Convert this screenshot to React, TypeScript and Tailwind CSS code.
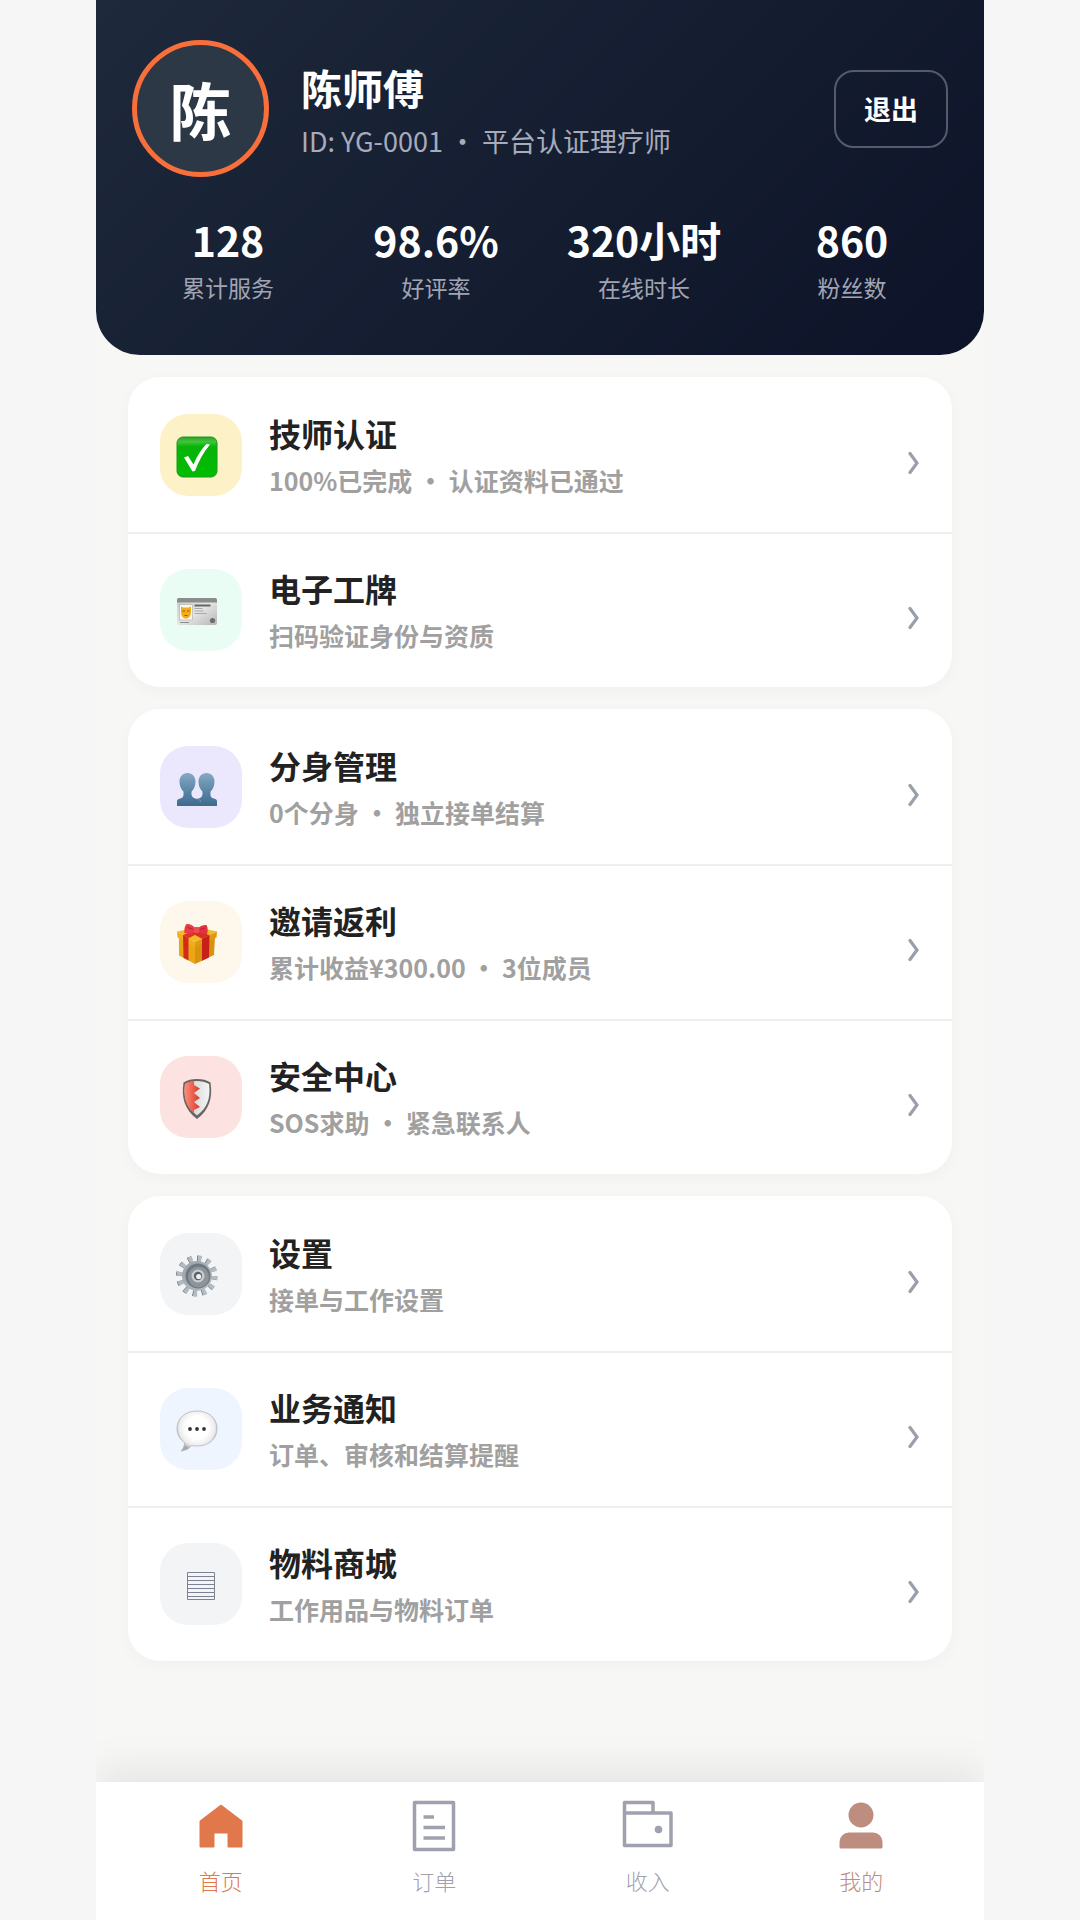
import type { ReactNode } from 'react';

interface MenuItem {
  title: string;
  desc: string;
  tile: string;
  icon: ReactNode;
}

const CheckIcon = () => (
  <svg viewBox="0 0 42 42" className="w-[42px] h-[42px]" aria-hidden="true">
    <defs>
      <linearGradient id="check-fill" x1="0" y1="0" x2="0" y2="1">
        <stop offset="0" stopColor="#2f9f2c" />
        <stop offset="0.12" stopColor="#3fc53a" />
        <stop offset="0.24" stopColor="#08b30a" />
        <stop offset="1" stopColor="#00bd00" />
      </linearGradient>
    </defs>
    <rect x="1" y="1" width="40" height="40" rx="6" fill="url(#check-fill)" stroke="#1b9a1b" />
    <path d="M8 21.500 L12 20 L17.500 28.500 C21 20 25 13.500 30.500 8 L34 8.500 C27.500 16 22.500 25.500 19 35 L16.500 35.500 Z" fill="#fff" />
  </svg>
);

const BadgeIcon = () => (
  <svg viewBox="0 0 42 42" className="w-[42px] h-[42px]" aria-hidden="true">
    <defs>
      <linearGradient id="badge-fill" x1="0" y1="0" x2="1" y2="1">
        <stop offset="0" stopColor="#c9c9c9" />
        <stop offset="0.5" stopColor="#e6e6e6" />
        <stop offset="1" stopColor="#b5b5b5" />
      </linearGradient>
    </defs>
    <rect x="1" y="7" width="40" height="27" rx="2" fill="url(#badge-fill)" />
    <path d="M3 7h36a2 2 0 0 1 2 2v2.500H1V9a2 2 0 0 1 2-2z" fill="#8b8d8c" />
    <rect x="3.500" y="13.500" width="13" height="15.500" fill="#fbf9ee" stroke="#a9a9a9" strokeWidth="0.600" />
    <path d="M5 15.500 L7.500 16.500 H12.500 L15 15.500 V21 C15 25 13 27.500 10 27.500 C7 27.500 5 25 5 21 Z" fill="#f3ad1c" />
    <path d="M6.500 20h2.500M11 20h2.500M8.500 24.500h3" stroke="#8c5a10" strokeWidth="1.100" />
    <path d="M18.500 14.500h16" stroke="#666" strokeWidth="1.800" />
    <path d="M18.500 17.500h8M18.500 20h9M18.500 22.500h12" stroke="#9a9a9a" strokeWidth="0.800" />
    <path d="M4 31.500h9" stroke="#8d8d8d" strokeWidth="1.200" />
    <circle cx="36.500" cy="29.500" r="2.600" fill="#6d6d6d" />
  </svg>
);

const PeopleIcon = () => (
  <svg viewBox="0 0 42 42" className="w-[42px] h-[42px]" aria-hidden="true">
    <defs>
      <linearGradient id="people-fill" x1="0" y1="0" x2="0" y2="1">
        <stop offset="0" stopColor="#84a9c4" />
        <stop offset="0.65" stopColor="#527f9f" />
        <stop offset="1" stopColor="#3f6b8c" />
      </linearGradient>
    </defs>
    <path
      d="M11.500 5c-5 0-8 3.500-8 8.700 0 4.800 1.900 7.600 3.900 9.800.6 3.500 0 6-2.400 6.800-2.400.7-4 1-4 3V38h40v-4.700c0-2-1.600-2.300-4-3-2.400-.8-3-3.300-2.400-6.800 2-2.200 3.900-5 3.900-9.800C38.500 8.500 35.500 5 30.500 5s-8 3.500-8 8.700c0 4.800 1.900 7.600 3.900 9.800.6 4-.4 6.500-5.400 7.500-5-1-6-3.500-5.400-7.500 2-2.200 3.900-5 3.900-9.800C19.500 8.500 16.500 5 11.500 5z"
      fill="url(#people-fill)"
    />
    <path d="M21 30.500c2 .8 3.500 1.500 3.500 3.500" stroke="#7da3bf" strokeWidth="0.800" fill="none" />
  </svg>
);

const GiftIcon = () => (
  <svg viewBox="0 0 42 42" className="w-[42px] h-[42px]" aria-hidden="true">
    <path d="M3 14 L19 23 V41 L3 32.500 Z" fill="#e9a714" />
    <path d="M39 14 L19 23 V41 L38 32 Z" fill="#d8920d" />
    <path d="M1 8.500 L22 4.500 L41 8.500 L19 19 Z" fill="#f5b925" />
    <path d="M1 8.500 L19 19 V24.500 L1.500 14.500 Z" fill="#efae1c" />
    <path d="M41 8.500 L19 19 V24.500 L40.500 14.500 Z" fill="#dd9a12" />
    <path d="M7 12 L12.500 15.200 V37.500 L7.500 34.800 Z" fill="#d42a1c" />
    <path d="M33.500 12 L26 15.700 V37.800 L33 34.500 Z" fill="#c7201a" />
    <path d="M7 12 L25 5 L30 6 L12.500 15.200 Z" fill="#dc3428" />
    <path d="M33.500 12 L14 6 L10 7 L26 15.700 Z" fill="#d62f24" />
    <path d="M19 5 C16.500 2 13.500 .5 10.500 1 C8.500 3.500 8 7 8.500 10 C13 11 17 10.500 19 8.500 Z" fill="#e83c44" />
    <path d="M22 5 C25 2.500 28 1.500 30.500 2 C32 4.500 32 8 31 11 C27 11 24 10.500 22 8.500 Z" fill="#e2323c" />
    <path d="M11.500 4.500 C14 5 16.500 6 18.500 7M29 5C27 5.500 24.500 6.500 22.500 7" stroke="#b01c30" strokeWidth="0.800" fill="none" />
    <rect x="17.500" y="4" width="6" height="6" rx="2" fill="#ee4c52" />
  </svg>
);

const ShieldIcon = () => (
  <svg viewBox="0 0 42 42" className="w-[42px] h-[42px]" aria-hidden="true">
    <defs>
      <linearGradient id="shield-red" x1="0" y1="0" x2="1" y2="0">
        <stop offset="0" stopColor="#ff8d78" />
        <stop offset="1" stopColor="#d9392c" />
      </linearGradient>
      <linearGradient id="shield-silver" x1="0" y1="0" x2="1" y2="0">
        <stop offset="0" stopColor="#c9cccc" />
        <stop offset="1" stopColor="#f4f5f5" />
      </linearGradient>
    </defs>
    <path d="M21 1 C26 1 31 2 34.500 4.500 C37 20 33 32 21 41 C9 32 5 20 7.500 4.500 C11 2 16 1 21 1 Z" fill="#6a6361" />
    <path d="M21 3 C25 3 30 4 33 6 C35 20 31 30 21 37.500 C11 30 7 20 9 6 C12 4 17 3 21 3 Z" fill="url(#shield-silver)" />
    <path d="M18 3 V7 L24 10.500 L18 15 L24 20 L18 24 L24 29 L18 32 V35 C11 29 7 20 9 6 C12 4 15 3.500 18 3 Z" fill="url(#shield-red)" />
  </svg>
);

const GearIcon = () => (
  <svg viewBox="0 0 42 42" className="w-[42px] h-[42px]" aria-hidden="true">
    <defs>
      <linearGradient id="gear-fill" x1="0" y1="0" x2="1" y2="1">
        <stop offset="0" stopColor="#99a1a8" />
        <stop offset="1" stopColor="#b9c0c6" />
      </linearGradient>
    </defs>
    <circle cx="20.500" cy="21" r="17.500" fill="none" stroke="#70777e" strokeWidth="6" strokeDasharray="3.800 5.363" />
    <circle cx="21.300" cy="21" r="17.500" fill="none" stroke="#b4bcc3" strokeWidth="6" strokeDasharray="3.800 5.363" />
    <circle cx="21" cy="21" r="15" fill="url(#gear-fill)" />
    <circle cx="22" cy="21" r="12.500" fill="#70777e" />
    <circle cx="22.500" cy="22" r="10.500" fill="#8d959c" />
    <circle cx="22" cy="21" r="6.500" fill="#c9ced2" />
    <circle cx="22" cy="21" r="4.200" fill="#5b6269" />
    <circle cx="22.700" cy="21.500" r="2.600" fill="#eef0f2" />
  </svg>
);

const SpeechIcon = () => (
  <svg viewBox="0 0 42 42" className="w-[42px] h-[42px]" aria-hidden="true">
    <defs>
      <radialGradient id="speech-fill" cx="0.5" cy="0.42" r="0.56">
        <stop offset="0.5" stopColor="#fff" />
        <stop offset="0.8" stopColor="#ececec" />
        <stop offset="1" stopColor="#a9a8a8" />
      </radialGradient>
    </defs>
    <path
      d="M21 1 C9 1 1 8.500 1 18.500 C1 24.500 4 29.500 8.500 32.500 C8.500 36 7.500 38.500 5 41 C10 40.500 13.500 38.500 15.500 35.500 C29.500 38 41 31 41 18.500 C41 8.500 33 1 21 1 Z"
      fill="url(#speech-fill)"
      stroke="#b5b4b4"
      strokeWidth="0.800"
    />
    <circle cx="14" cy="19" r="1.900" fill="#333" />
    <circle cx="21" cy="19" r="1.900" fill="#333" />
    <circle cx="28" cy="19" r="1.900" fill="#333" />
  </svg>
);

const MaterialIcon = () => (
  <svg viewBox="0 0 30 30" className="w-[30px] h-[30px] ml-2" fill="none" stroke="#7d8290" aria-hidden="true">
    <path d="M1.500 1.500h27v27h-27z M1.500 5.500h27M1.500 9.500h27M1.500 13.500h27M1.500 17.500h27M1.500 21.500h27M1.500 25.500h27" />
  </svg>
);

const ChevronIcon = () => (
  <svg viewBox="0 0 12 24" className="w-3 h-6 mt-4 shrink-0" fill="none" aria-hidden="true">
    <path d="M2 2.500 L9 12 L2 21.500" stroke="#9b9eac" strokeWidth="3.200" strokeLinecap="round" />
  </svg>
);

const stats = [
  { value: '128', label: '累计服务' },
  { value: '98.6%', label: '好评率' },
  { value: '320小时', label: '在线时长' },
  { value: '860', label: '粉丝数' },
];

const groups: MenuItem[][] = [
  [
    { title: '技师认证', desc: '100%已完成 · 认证资料已通过', tile: 'bg-[#fdf1c8]', icon: <CheckIcon /> },
    { title: '电子工牌', desc: '扫码验证身份与资质', tile: 'bg-[#eafdf5]', icon: <BadgeIcon /> },
  ],
  [
    { title: '分身管理', desc: '0个分身 · 独立接单结算', tile: 'bg-[#ebe8fe]', icon: <PeopleIcon /> },
    { title: '邀请返利', desc: '累计收益¥300.00 · 3位成员', tile: 'bg-[#fef7ec]', icon: <GiftIcon /> },
    { title: '安全中心', desc: 'SOS求助 · 紧急联系人', tile: 'bg-[#fde2e2]', icon: <ShieldIcon /> },
  ],
  [
    { title: '设置', desc: '接单与工作设置', tile: 'bg-[#f3f4f6]', icon: <GearIcon /> },
    { title: '业务通知', desc: '订单、审核和结算提醒', tile: 'bg-[#eef5ff]', icon: <SpeechIcon /> },
    { title: '物料商城', desc: '工作用品与物料订单', tile: 'bg-[#f3f4f6]', icon: <MaterialIcon /> },
  ],
];

const tabs = [
  {
    label: '首页',
    color: 'text-[#e0784c]',
    icon: <path d="M26 5 L47 21 V47 H33 V33 H19 V47 H5 V21 Z" fill="currentColor" stroke="currentColor" strokeLinejoin="round" />,
  },
  {
    label: '订单',
    color: 'text-[#9fa1af]',
    icon: (
      <path
        d="M6.500 2.500h39v47h-39z M15.500 17h10.500M15.500 27.500h21.500M15.500 38h21.500"
        fill="none"
        stroke="currentColor"
        strokeWidth="3.500"
        strokeLinejoin="round"
      />
    ),
  },
  {
    label: '收入',
    color: 'text-[#9fa1af]',
    icon: (
      <>
        <path d="M2.500 13V2.500h28.500V13M2.500 13h46.500v32.500h-46.500z" fill="none" stroke="currentColor" strokeWidth="3.500" strokeLinejoin="round" />
        <circle cx="36.500" cy="29.500" r="3.800" fill="currentColor" />
      </>
    ),
  },
  {
    label: '我的',
    color: 'text-[#bd8d80]',
    icon: (
      <>
        <circle cx="26" cy="15" r="12.500" fill="currentColor" />
        <path d="M4.500 47V42a9.500 9.500 0 0 1 9.500-9.500h24a9.500 9.500 0 0 1 9.500 9.500v5q0 1.500-1.500 1.500h-40q-1.500 0-1.500-1.500z" fill="currentColor" />
      </>
    ),
  },
];

const App = () => {
  return (
    <div lang="zh-CN" className="min-h-screen bg-[#f6f6f6] font-['Noto_Sans_CJK_SC',sans-serif]">
      <div className="mx-auto flex min-h-screen w-full max-w-[888px] flex-col bg-[#f7f7f5]">
        <header className="rounded-b-[44px] bg-linear-135 from-[#1e293b] to-[#0d1328] pt-10 pb-[52px]">
          <div className="flex items-center px-9">
            <div className="flex h-[137px] w-[137px] shrink-0 items-center justify-center rounded-full border-5 border-[#f96f3b] bg-[#2d3847] text-[62px] leading-none font-bold text-white">
              陈
            </div>
            <div className="ml-8 min-w-0 flex-1 pt-1">
              <h1 className="text-[41px] leading-[48px] font-bold text-white">陈师傅</h1>
              <p className="mt-3 text-[27px] leading-9 text-[#a7abba]">ID: YG-0001 · 平台认证理疗师</p>
            </div>
            <button type="button" className="shrink-0 rounded-[20px] border-2 border-[#565b6b] px-7 py-[19px] text-[27px] leading-9 font-bold text-white">
              退出
            </button>
          </div>
          <dl className="mt-[38px] grid grid-cols-4 px-7 text-center">
            {stats.map((stat) => (
              <div key={stat.label} className="flex flex-col-reverse">
                <dt className="mt-2 text-[23px] leading-8 text-[#a0a4b3]">{stat.label}</dt>
                <dd className="text-[41px] leading-[48px] font-bold text-white">{stat.value}</dd>
              </div>
            ))}
          </dl>
        </header>

        <main className="flex flex-1 flex-col gap-[22px] px-8 pt-[22px] pb-10">
          {groups.map((group) => (
            <ul key={group[0].title} className="overflow-hidden rounded-[32px] bg-white shadow-[0_4px_16px_rgba(0,0,0,0.03)]">
              {group.map((item) => (
                <li key={item.title} className="border-t-2 border-[#efeff0] first:border-transparent">
                  <a href="#" className="flex items-center px-8 pt-[33px] pb-[34px]">
                    <span className={`flex h-[82px] w-[82px] shrink-0 items-center justify-center rounded-[28px] pt-1 pr-2 ${item.tile}`}>
                      {item.icon}
                    </span>
                    <span className="ml-[27px] flex min-w-0 flex-1 flex-col gap-2">
                      <span className="text-[32px] leading-[42px] font-bold text-[#222]">{item.title}</span>
                      <span className="text-[25px] leading-9 font-bold text-[#a0a0a0]">{item.desc}</span>
                    </span>
                    <ChevronIcon />
                  </a>
                </li>
              ))}
            </ul>
          ))}
        </main>

        <nav className="sticky bottom-0 flex bg-white pt-[18px] pr-4 pb-6 pl-[18px] shadow-[0_-12px_40px_rgba(0,0,0,0.08)] [clip-path:inset(-80px_0_0_0)]">
          {tabs.map((tab) => (
            <a key={tab.label} href="#" className={`flex flex-1 flex-col items-center gap-3 ${tab.color}`}>
              <svg viewBox="0 0 52 52" className="h-[52px] w-[52px]" aria-hidden="true">
                {tab.icon}
              </svg>
              <span className="font-['Kaiti_SC','STKaiti','KaiTi','Noto_Sans_CJK_SC',sans-serif] text-[22px] leading-8 font-light">{tab.label}</span>
            </a>
          ))}
        </nav>
      </div>
    </div>
  );
};

export default App;
